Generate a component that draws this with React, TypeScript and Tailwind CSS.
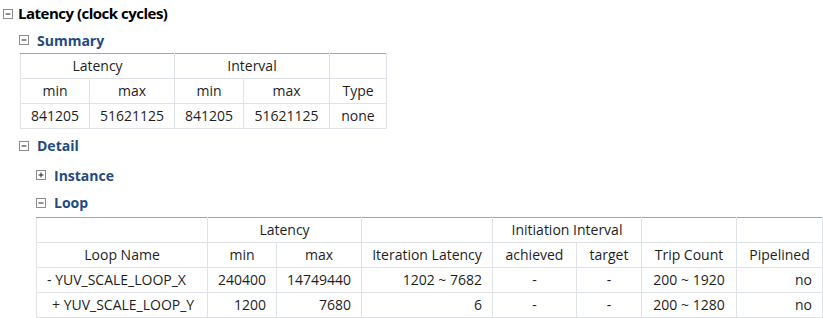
import React from 'react';

// Collapsible tree marker: small boxed minus / plus
const Toggle: React.FC<{ open?: boolean }> = ({ open = true }) => (
    <svg width="10" height="10" viewBox="0 0 10 10" className="shrink-0">
        <rect x="0.5" y="0.5" width="9" height="9" fill="#fff" stroke="#8c8c8c" />
        <line x1="2.5" y1="5" x2="7.5" y2="5" stroke="#222" />
        {!open && <line x1="5" y1="2.5" x2="5" y2="7.5" stroke="#222" />}
    </svg>
);

const Section: React.FC<{ title: string; open?: boolean; className?: string }> = ({ title, open = true, className = '' }) => (
    <div className={`flex items-center gap-[8px] ${className}`}>
        <Toggle open={open} />
        <span className="text-[14px] font-bold text-[#1f4b7f]">{title}</span>
    </div>
);

const cell = 'border border-[#dfe3e8] h-[25px] p-0 font-normal';
const top = 'border-t-[#a6a6a6]';

const summary = ['841205', '51621125', '841205', '51621125', 'none'];

const loops = [
    { name: '- YUV_SCALE_LOOP_X', pad: 'pl-[10px]', min: '240400', max: '14749440', iter: '1202 ~ 7682', trip: '200 ~ 1920', pipe: 'no' },
    { name: '+ YUV_SCALE_LOOP_Y', pad: 'pl-[15px]', min: '1200', max: '7680', iter: '6', trip: '200 ~ 1280', pipe: 'no' },
];

export default function App() {
    return (
        <div
            className="w-[823px] h-[318px] overflow-hidden bg-white text-[#1e1e1e] pl-[3px]"
            style={{ fontFamily: '"Open Sans", "Noto Sans", sans-serif' }}
        >
            {/* Title */}
            <div className="flex items-center gap-[5px] h-[27px]">
                <Toggle />
                <span className="text-[15px] font-bold text-black tracking-[-0.5px]">Latency (clock cycles)</span>
            </div>

            <div className="pl-[16px]">
                <Section title="Summary" className="h-[26px]" />
                <table className="ml-[1px] border-collapse table-fixed text-[14px] text-center leading-none">
                    <colgroup>
                        <col className="w-[69px]" />
                        <col className="w-[85px]" />
                        <col className="w-[69px]" />
                        <col className="w-[86px]" />
                        <col className="w-[57px]" />
                    </colgroup>
                    <thead>
                        <tr>
                            <th colSpan={2} className={`${cell} ${top}`}>Latency</th>
                            <th colSpan={2} className={`${cell} ${top}`}>Interval</th>
                            <th className={`${cell} ${top}`}></th>
                        </tr>
                        <tr>
                            {['min', 'max', 'min', 'max', 'Type'].map((h, i) => (
                                <th key={i} className={cell}>{h}</th>
                            ))}
                        </tr>
                    </thead>
                    <tbody>
                        <tr>
                            {summary.map((v, i) => (
                                <td key={i} className={cell}>{v}</td>
                            ))}
                        </tr>
                    </tbody>
                </table>

                <Section title="Detail" className="h-[33px]" />

                <div className="pl-[17px]">
                    <Section title="Instance" open={false} className="h-[26px]" />
                    <Section title="Loop" className="h-[29px]" />
                    <table className="border-collapse table-fixed text-[14px] leading-none">
                        <colgroup>
                            <col className="w-[171px]" />
                            <col className="w-[69px]" />
                            <col className="w-[85px]" />
                            <col className="w-[131px]" />
                            <col className="w-[84px]" />
                            <col className="w-[65px]" />
                            <col className="w-[95px]" />
                            <col className="w-[86px]" />
                        </colgroup>
                        <thead className="text-center">
                            <tr>
                                <th className={`${cell} ${top}`}></th>
                                <th colSpan={2} className={`${cell} ${top}`}>Latency</th>
                                <th className={`${cell} ${top}`}></th>
                                <th colSpan={2} className={`${cell} ${top}`}>Initiation Interval</th>
                                <th className={`${cell} ${top}`}></th>
                                <th className={`${cell} ${top}`}></th>
                            </tr>
                            <tr>
                                {['Loop Name', 'min', 'max', 'Iteration Latency', 'achieved', 'target', 'Trip Count', 'Pipelined'].map((h) => (
                                    <th key={h} className={cell}>{h}</th>
                                ))}
                            </tr>
                        </thead>
                        <tbody>
                            {loops.map((r) => (
                                <tr key={r.name}>
                                    <td className={`${cell} ${r.pad} text-left`}>{r.name}</td>
                                    <td className={`${cell} pr-[10px] text-right`}>{r.min}</td>
                                    <td className={`${cell} pr-[10px] text-right`}>{r.max}</td>
                                    <td className={`${cell} pr-[10px] text-right`}>{r.iter}</td>
                                    <td className={`${cell} text-center`}>-</td>
                                    <td className={`${cell} text-center`}>-</td>
                                    <td className={`${cell} text-center`}>{r.trip}</td>
                                    <td className={`${cell} pr-[10px] text-right`}>{r.pipe}</td>
                                </tr>
                            ))}
                        </tbody>
                    </table>
                </div>
            </div>
        </div>
    );
}
